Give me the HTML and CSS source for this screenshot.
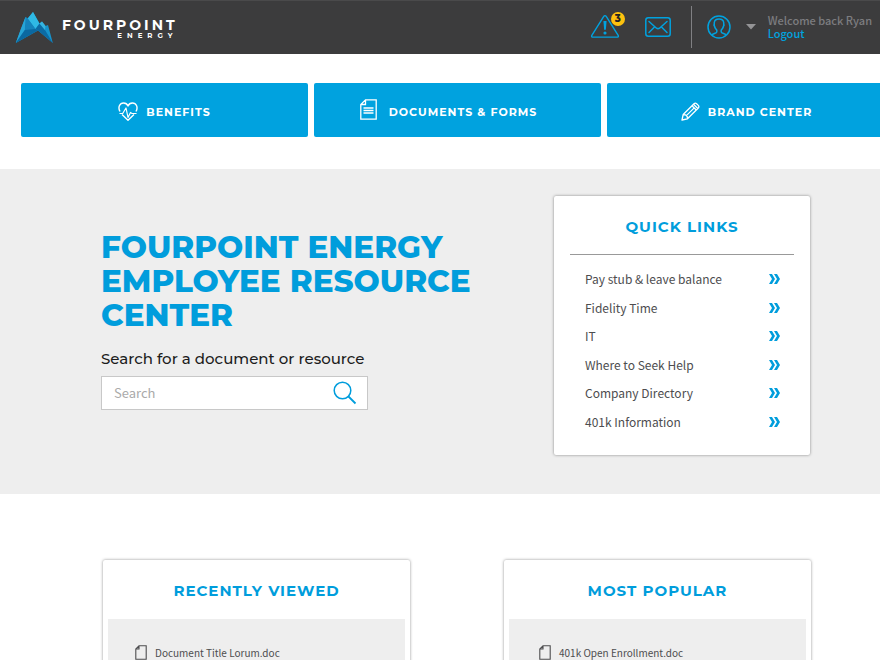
FILE: index.html
```html
<!DOCTYPE html>
<html lang="en">
<head>
<meta charset="utf-8">
<meta name="viewport" content="width=device-width, initial-scale=1">
<title>FourPoint Energy Employee Resource Center</title>
<link rel="stylesheet" href="styles.css">
</head>
<body>
<svg class="sprite" aria-hidden="true">
  <symbol id="chevrons" viewBox="0 0 11 10"><path d="M0 0h3l3 5-3 5H0l3-5zM5 0h3l3 5-3 5H5l3-5z" fill="currentColor"/></symbol>
  <symbol id="file" viewBox="0 0 12 15"><path d="M4 .8h7.2v13.4H.8V4zM4 .8V4H.8" fill="none" stroke="currentColor" stroke-width="1.1"/></symbol>
</svg>
<header class="topbar">
  <a class="brand" href="#">
    <svg class="brand-mark" viewBox="0 0 38 32" aria-hidden="true">
      <path d="M.8 31 10.500 5l2.200 1.500L18 0l6.500 11.500 2.500-2 3.500 4.500 2.500-1L37.800 31 23 18.500z" fill="#1793cb"/>
      <path d="M18 0l6.500 11.500L20.500 17l-7.800-10.500z" fill="#2fb9e4"/>
      <path d="M10.500 5l2.200 1.500L20.500 17 .8 31l9-13z" fill="#1583bb"/>
      <path d="M10.500 5 6 16.500.8 31l9-13z" fill="#27a5d6"/>
      <path d="M9.800 18l10.700-1 2.500 1.500L.8 31z" fill="#0b68a0"/>
      <path d="M24.500 11.500 20.500 17l2.500 1.500L37.800 31 30 18z" fill="#0c6ba4"/>
      <path d="M27 9.500l3.500 4.500-.5 4-5.500-6.500z" fill="#35b4e0"/>
    </svg>
    <span class="brand-text">
      <span class="brand-name">FOURPOINT</span>
      <span class="brand-sub">ENERGY</span>
    </span>
  </a>
  <div class="tools">
    <button class="tool alerts" type="button" aria-label="Alerts">
      <svg width="28" height="25" viewBox="0 0 30 26" aria-hidden="true"><path d="M13.700 2.200.9 22.500c-.6 1 0 1.900 1 1.900h26.200c1 0 1.600-.9 1-1.900L16.300 2.200c-.7-1.100-1.900-1.100-2.600 0z" fill="none" stroke="currentColor" stroke-width="1.500"/><path d="M13.300 7h3.400l-.8 9.500h-1.800z" fill="currentColor"/><circle cx="15" cy="20" r="1.700" fill="currentColor"/></svg>
      <span class="badge">3</span>
    </button>
    <button class="tool mail" type="button" aria-label="Messages">
      <svg width="26" height="20" viewBox="0 0 26 20" aria-hidden="true"><g fill="none" stroke="currentColor" stroke-width="1.500" stroke-linecap="round" stroke-linejoin="round"><rect x=".8" y=".8" width="24.400" height="18.400" rx="2.500"/><path d="M4 4.500l7.500 6.700q1.500 1.200 3 0L22 4.500M4 15.500l5-5M22 15.500l-5-5"/></g></svg>
    </button>
    <div class="account">
      <button class="tool profile" type="button" aria-label="Account menu">
        <svg width="24" height="24" viewBox="0 0 24 24" aria-hidden="true"><g fill="none" stroke="currentColor" stroke-width="1.500" stroke-linejoin="round"><circle cx="12" cy="12" r="11"/><path d="M4.500 20c1-1.500 5.300-1.700 5.300-3v-2C7.500 13 7 10 7.300 7.500 7.700 5 9.500 4 12 4s4.300 1 4.700 3.500c.3 2.500-.2 5.500-2.500 7.500v2c0 1.300 4.300 1.500 5.300 3"/><path d="M7.300 9q-1 2 .8 3M16.700 9q1 2-.8 3" stroke-width="1"/></g></svg>
        <svg class="caret" width="10" height="6" viewBox="0 0 10 6" aria-hidden="true"><path d="M0 0h10L5 5.500z" fill="currentColor"/></svg>
      </button>
      <p class="welcome">Welcome back Ryan<a href="#">Logout</a></p>
    </div>
  </div>
</header>
<nav class="sections" aria-label="Sections">
  <a class="section-link" href="#">
    <svg width="20" height="19" viewBox="0 0 20 19" aria-hidden="true"><g fill="none" stroke="currentColor" stroke-width="1.400" stroke-linejoin="round"><path d="M2 9.500C-.5 5 2 1 5.500 1 8 1 9.500 2.700 10 4c.5-1.300 2-3 4.500-3C18 1 20.500 5 18 9.500M4 12.500l6 5.700 6-5.700"/><path d="M1.500 11.500h3.200L8 6l2 9.500 2.500-5L14 11.500h4.500" stroke-width="1.200"/></g></svg>
    <span>BENEFITS</span>
  </a>
  <a class="section-link documents" href="#">
    <svg width="17" height="21" viewBox="0 0 17 21" aria-hidden="true"><path d="M5.500.8h10.700v19.400H.8V5.500zM5.500.8v4.700H.8M3.500 9h10M3.500 11.500h10M3.500 14h10" fill="none" stroke="currentColor" stroke-width="1.300"/></svg>
    <span>DOCUMENTS &amp; FORMS</span>
  </a>
  <a class="section-link brand-center" href="#">
    <svg width="19" height="19" viewBox="0 0 19 19" aria-hidden="true"><path d="M1 18l1.200-5.500L13 1.700q1.300-1.200 2.600 0l1.700 1.700q1.200 1.300 0 2.600L6.500 16.800zM2.200 12.500l2.300.3 1.700 1.700.3 2.300M11 3.700 15.300 8M12.500 2.200l4.300 4.300M5.400 13.600l7.800-7.700" fill="none" stroke="currentColor" stroke-width="1.300" stroke-linejoin="round"/></svg>
    <span>BRAND CENTER</span>
  </a>
</nav>
<main>
  <section class="hero">
    <div class="intro">
      <h1>FOURPOINT ENERGY<br>EMPLOYEE RESOURCE<br>CENTER</h1>
      <form class="search">
        <label for="resource-search">Search for a document or resource</label>
        <div class="search-box">
          <input id="resource-search" type="text" placeholder="Search">
          <button type="submit" aria-label="Search">
            <svg width="24" height="24" viewBox="0 0 24 24" aria-hidden="true"><g fill="none" stroke="currentColor" stroke-width="1.500"><circle cx="9.500" cy="9.500" r="8.300"/><path d="M15.500 15.500l7 7" stroke-width="1.800"/></g></svg>
          </button>
        </div>
      </form>
    </div>
    <section class="card quick">
      <h2>QUICK LINKS</h2>
      <ul>
        <li><a href="#">Pay stub &amp; leave balance<svg width="11" height="10" aria-hidden="true"><use href="#chevrons"/></svg></a></li>
        <li><a href="#">Fidelity Time<svg width="11" height="10" aria-hidden="true"><use href="#chevrons"/></svg></a></li>
        <li><a href="#">IT<svg width="11" height="10" aria-hidden="true"><use href="#chevrons"/></svg></a></li>
        <li><a href="#">Where to Seek Help<svg width="11" height="10" aria-hidden="true"><use href="#chevrons"/></svg></a></li>
        <li><a href="#">Company Directory<svg width="11" height="10" aria-hidden="true"><use href="#chevrons"/></svg></a></li>
        <li><a href="#">401k Information<svg width="11" height="10" aria-hidden="true"><use href="#chevrons"/></svg></a></li>
      </ul>
    </section>
  </section>
  <div class="lists">
    <section class="card list">
      <h2>RECENTLY VIEWED</h2>
      <div class="files">
        <a href="#"><svg width="12" height="15" aria-hidden="true"><use href="#file"/></svg>Document Title Lorum.doc</a>
      </div>
    </section>
    <section class="card list popular">
      <h2>MOST POPULAR</h2>
      <div class="files">
        <a href="#"><svg width="12" height="15" aria-hidden="true"><use href="#file"/></svg>401k Open Enrollment.doc</a>
      </div>
    </section>
  </div>
</main>
</body>
</html>
```
FILE: styles.css
```css
:root {
  --blue: #00a2df;
  --blue-text: #009ddc;
  --display: Montserrat, Inter, sans-serif;
  --body: "Source Sans Pro", "Noto Sans CJK SC", sans-serif;
}

* { box-sizing: border-box; }

body {
  margin: 0;
  background: #fff;
  color: #4d4d4f;
  font: 12px/16px var(--body);
  overflow: hidden;
}

h1, h2, p, ul { margin: 0; padding: 0; }
ul { list-style: none; }
a { color: inherit; text-decoration: none; }
svg { display: block; flex: none; }
button { padding: 0; border: 0; background: none; color: inherit; cursor: pointer; }
.sprite { position: absolute; width: 0; height: 0; }

.topbar {
  display: flex;
  justify-content: space-between;
  align-items: center;
  height: 54px;
  padding: 0 8px 0 15px;
  background: #3c3c3d;
  border-top: 1px solid #4a4a4b;
}

.brand { display: flex; align-items: center; gap: 9px; color: #fff; }
.brand-mark { width: 38px; height: 32px; }
.brand-text { display: flex; flex-direction: column; padding-top: 2px; font-family: var(--display); font-weight: 700; }
.brand-name { font-size: 14px; line-height: 14px; letter-spacing: 3px; }
.brand-sub { align-self: flex-end; font-size: 7px; line-height: 8px; letter-spacing: 5px; }

.tools { display: flex; align-items: center; padding-bottom: 2px; color: var(--blue); }
.tool { display: flex; align-items: center; }
.alerts { position: relative; margin-right: 26px; }
.badge {
  position: absolute;
  top: -2px;
  right: -6px;
  width: 14px;
  height: 14px;
  border-radius: 50%;
  background: #fdc10f;
  color: #222;
  font: 800 10px/14px var(--display);
  text-align: center;
}
.mail { margin-right: 20px; }
.account {
  display: flex;
  align-items: center;
  height: 42px;
  padding-left: 15px;
  border-left: 1px solid #808083;
}
.profile { gap: 15px; margin-right: 12px; }
.caret { color: #949496; }
.welcome {
  color: #7d7d80;
  font-size: 11px;
  font-weight: 500;
  line-height: 13px;
}
.welcome a { display: block; color: var(--blue); }

.sections {
  display: grid;
  grid-template-columns: repeat(3, 1fr);
  gap: 6px;
  margin: 29px -14px 32px 21px;
}
.section-link {
  display: flex;
  align-items: center;
  justify-content: center;
  gap: 8px;
  height: 54px;
  padding-top: 3px;
  border-radius: 2px;
  background: var(--blue);
  color: #fff;
  font: 700 11px/16px var(--display);
  letter-spacing: 1px;
}
.documents { gap: 12px; padding-right: 18px; }
.documents svg { margin-bottom: 5px; }
.brand-center { padding-right: 8px; }

.hero {
  display: flex;
  justify-content: space-between;
  align-items: flex-start;
  padding: 27px 70px 39px 101px;
  background: #eee;
}
.intro { padding-top: 34px; }
h1 {
  color: var(--blue-text);
  font: 800 31px/34px var(--display);
}
.search label {
  display: block;
  margin: 16px 0 6px;
  color: #1c1c1c;
  font: 500 15px/22px var(--display);
}
.search-box {
  display: flex;
  align-items: center;
  width: 267px;
  height: 34px;
  padding: 0 10px 0 12px;
  border: 1px solid #c8c8c8;
  background: #fff;
  color: var(--blue-text);
}
.search-box input {
  flex: 1;
  min-width: 0;
  padding: 0;
  border: 0;
  outline: 0;
  background: none;
  font: 13px/20px var(--body);
}
.search-box input::placeholder { color: #aaa; opacity: 1; }

.card {
  border-radius: 2px;
  background: #fff;
  box-shadow: 0 0 3px rgba(0, 0, 0, .45);
}
.card h2 {
  color: var(--blue-text);
  font: 700 15px/22px var(--display);
  letter-spacing: 1px;
  text-align: center;
}

.quick { width: 256px; padding: 20px 16px 19px; }
.quick h2 { padding-bottom: 16px; border-bottom: 1px solid #999; }
.quick ul {
  display: grid;
  grid-auto-rows: 1fr;
  height: 171px;
  margin: 10px 14px 0 15px;
}
.quick a {
  display: flex;
  align-items: center;
  justify-content: space-between;
  height: 100%;
}
.quick svg { color: #009ddc; }

.lists {
  display: grid;
  grid-template-columns: 1fr 1fr;
  gap: 94px;
  padding: 66px 69px 0 103px;
}
.list { padding: 20px 5px 5px; }
.files {
  min-height: 240px;
  margin-top: 17px;
  padding: 26px 27px;
  background: #eee;
}
.files a { display: flex; align-items: center; gap: 8px; font-size: 10px; line-height: 15px; }
.popular .files { padding-left: 30px; }
```
